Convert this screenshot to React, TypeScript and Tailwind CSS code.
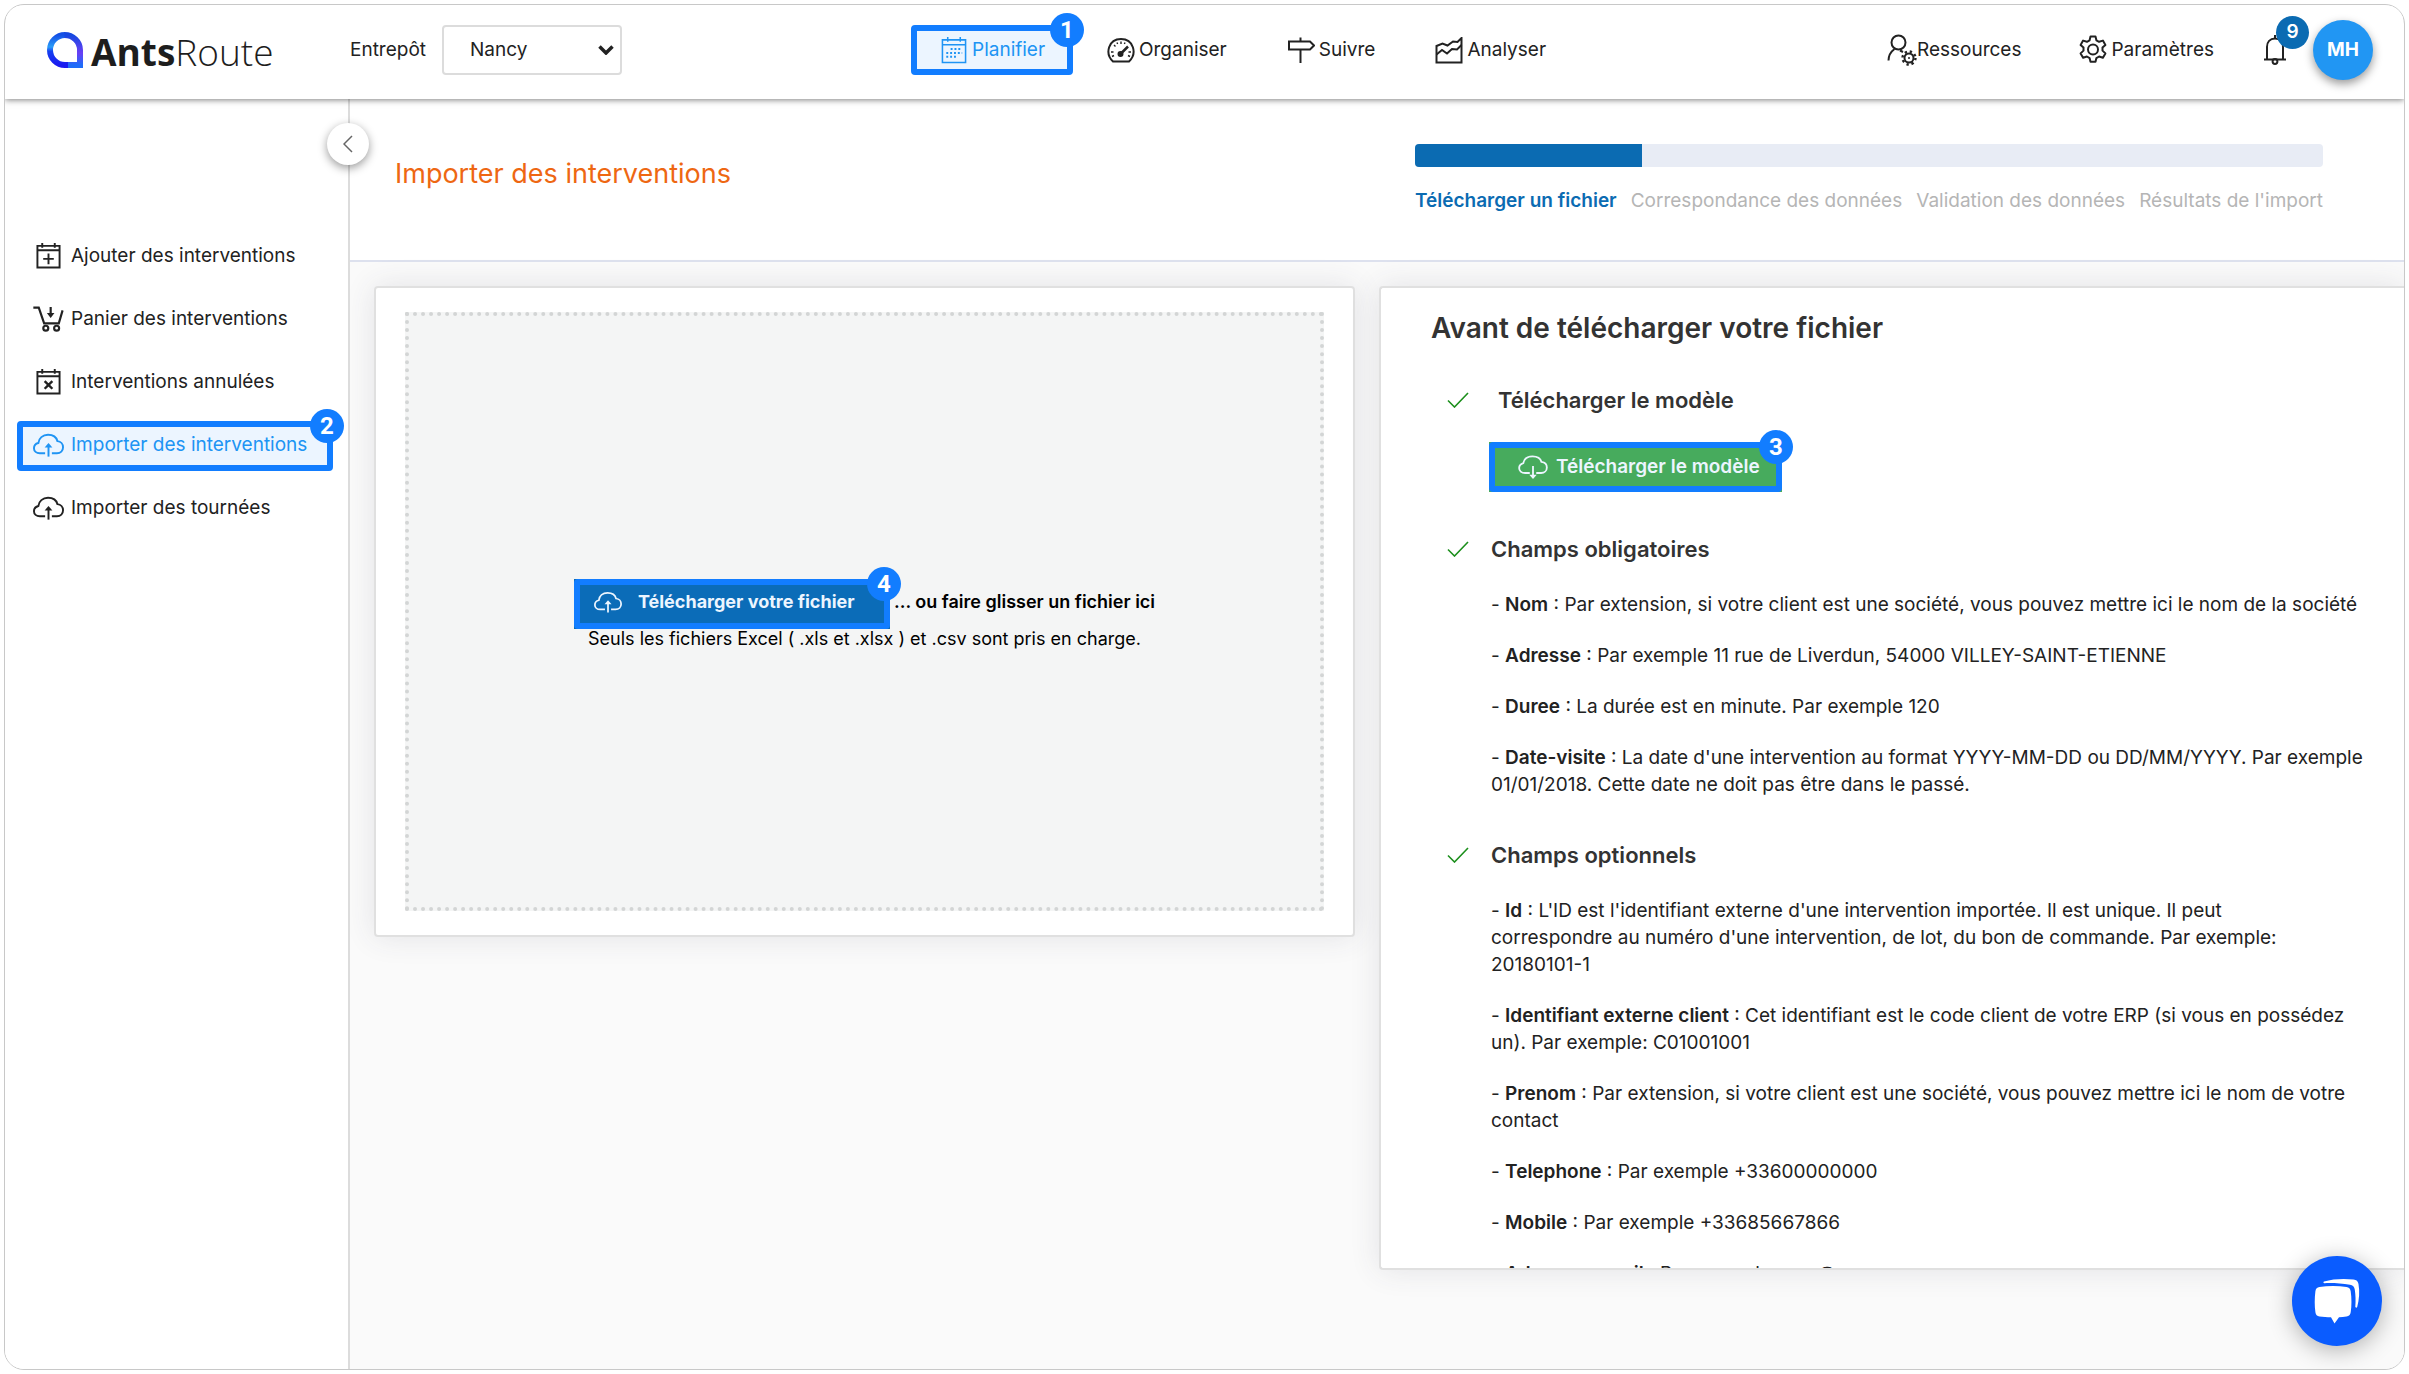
import React, { useState } from 'react';

type Glyph = React.FC<{ className?: string }>;

interface MarkerProps {
  step: number;
}

const Marker: React.FC<MarkerProps> = ({ step }) => (
  <span className="absolute inset-0 rounded-sm border-6 border-[#127dff] bg-[#127dff]/8 pointer-events-none">
    <span className="absolute -top-[18px] -right-[17px] flex h-[34px] w-[34px] items-center justify-center rounded-full bg-[#127dff] font-['Roboto',sans-serif] text-2xl font-bold text-white">
      {step}
    </span>
  </span>
);

const strokeProps = { fill: 'none', stroke: 'currentColor', strokeWidth: 2 };

const CalendarIcon: Glyph = ({ className }) => (
  <svg viewBox="0 0 26 28" className={className} {...strokeProps} strokeWidth={1.6}>
    <path d="M1 3h24v23.500H1zM1 8h24M6.500 0v5M19.500 0v5" />
    <path d="M9.500 12.500h12M5 16.500h16.500M5 20.500h12" strokeWidth={2} strokeDasharray="2 2" />
  </svg>
);

const GaugeIcon: Glyph = ({ className }) => (
  <svg viewBox="0 0 28 26" className={className} {...strokeProps}>
    <path d="M6 24C-2.500 16 1.500 1.500 14 1.500S30.500 16 22 24z" />
    <path d="M14 4v2.500M4 14.500h2.500M21.500 14.500H24M7 7.500l1.500 1.500M5 19l2-1M23 19l-2-1M10 5l.6 1.500M18 5l-.6 1.500" strokeWidth={1.400} />
    <path d="M13.500 16.500L21 9" strokeWidth={2.500} />
    <circle cx="13.500" cy="16.500" r="2" fill="currentColor" />
  </svg>
);

const SignIcon: Glyph = ({ className }) => (
  <svg viewBox="0 0 28 26" className={className} {...strokeProps}>
    <path d="M2 4h21l4 4-4 4H2zM13.500 0v4M13.500 12v13.500" />
  </svg>
);

const ChartIcon: Glyph = ({ className }) => (
  <svg viewBox="0 0 28 27" className={className} {...strokeProps}>
    <path d="M1.500 25.500V9l6-2.500 5 2L18 4.500l4.500.5 4-4v24.500z" />
    <path d="M1.500 17.500L7 13l5 3.500 5-4.500 5 .5 4.500-4.500" />
  </svg>
);

const UserGearIcon: Glyph = ({ className }) => (
  <svg viewBox="0 0 30 32" className={className} {...strokeProps}>
    <circle cx="11.500" cy="8.500" r="7" />
    <path d="M1.500 26.500c0-5 2-8.500 6-11.500M13 16.500l3 1.500" />
    <circle cx="22" cy="24" r="4.500" />
    <circle cx="22" cy="24" r="1" fill="currentColor" stroke="none" />
    <circle cx="22" cy="24" r="6.500" strokeWidth={2.400} strokeDasharray="2.300 2.800" />
  </svg>
);

const GearIcon: Glyph = ({ className }) => (
  <svg viewBox="0 0 28 30" className={className} {...strokeProps} strokeLinejoin="round">
    <path d="M11.500 1.500h5l.9 3.800 2.700 1.500 3.800-1.200 2.500 4.300-2.900 2.700v3l2.900 2.800-2.500 4.300-3.800-1.200-2.700 1.600-.9 3.700h-5l-.9-3.700-2.700-1.600-3.800 1.200-2.500-4.300 2.900-2.800v-3L1.600 9.900l2.500-4.300 3.800 1.200 2.700-1.500z" />
    <circle cx="14" cy="14.500" r="5" />
  </svg>
);

const BellIcon: Glyph = ({ className }) => (
  <svg viewBox="0 0 22 30" className={className} {...strokeProps}>
    <path d="M0 24.500h22M3 24.500V12c0-5 3-8.500 8-8.500s8 3.500 8 8.500v12.500M11 3.500V0" />
    <circle cx="11" cy="26.500" r="2.400" />
  </svg>
);

const AddCalendarIcon: Glyph = ({ className }) => (
  <svg viewBox="0 0 26 27" className={className} {...strokeProps}>
    <path d="M1.500 3h23v22.500h-23zM1.500 7.500h23M6.500 0v5M19.500 0v5M13 11v11M7.500 16.500h11" />
  </svg>
);

const CancelCalendarIcon: Glyph = ({ className }) => (
  <svg viewBox="0 0 26 27" className={className} {...strokeProps}>
    <path d="M1.500 3h23v22.500h-23zM1.500 7.500h23M6.500 0v5M19.500 0v5" />
    <path d="M9 12.500l8 8M17 12.500l-8 8" strokeWidth={2.500} />
  </svg>
);

const CartIcon: Glyph = ({ className }) => (
  <svg viewBox="0 0 28 24" className={className} {...strokeProps}>
    <path d="M0 1.500h5l5 14.500h13.500l3.500-12M16 1v8" />
    <path d="M12.500 6.500h7L16 11z" fill="currentColor" stroke="none" />
    <circle cx="11.500" cy="20.500" r="2.300" />
    <circle cx="21.500" cy="20.500" r="2.300" />
  </svg>
);

const CloudUpIcon: Glyph = ({ className }) => (
  <svg viewBox="0 0 32 24" className={className} {...strokeProps}>
    <path d="M12.500 20.500H7C3.500 20.500 1 18.300 1 15.300c0-2.800 1.800-4.600 4.500-5.300C6 5 10 1.500 15.500 1.500c5 0 8.700 2.500 9.700 6.500 3.500.3 5.800 3 5.800 6.300 0 3.600-2.600 6.200-6.300 6.200h-5.200" />
    <path d="M16 24V12" />
    <path d="M12 14.500l4-4.500 4 4.500z" fill="currentColor" stroke="none" />
  </svg>
);

const CloudDownIcon: Glyph = ({ className }) => (
  <svg viewBox="0 0 32 26" className={className} {...strokeProps}>
    <path d="M12.500 19.500H7.500C3.500 19.500 1 17 1 14c0-2.600 1.800-4.500 4.500-5.300C6.500 4 10.500 1.500 15.500 1.500s8.700 2.500 9.700 6C28.800 8 31 10.500 31 13.500c0 3.400-2.600 6-6.300 6h-5.200" />
    <path d="M16 12v11" />
    <path d="M12 21.500h8L16 26z" fill="currentColor" stroke="none" />
  </svg>
);

const CheckIcon: Glyph = ({ className }) => (
  <svg viewBox="0 0 22 16" className={className} fill="none" stroke="#1c8f1c" strokeWidth={1.600}>
    <path d="M1 8.500L7.500 15 21 1" />
  </svg>
);

const ChatIcon: Glyph = ({ className }) => (
  <svg viewBox="0 0 46 46" className={className} fill="#fff">
    <path d="M10 3.500C19 .7 31 .5 39.500 1.500c3 .4 4.500 1.700 5 4.500 1.300 7.500.8 15.500-1.300 23-.3 1-1.900.8-1.900-.2.500-6 .3-11.500-.5-17-.4-3-2-4.600-4.800-5C27.500 5.500 19 4.800 10.500 5.200c-1.200 0-1.500-1.300-.5-1.700z" />
    <path d="M5.500 9C14 7.500 24 7.500 32.500 9c2.500.4 3.800 1.700 4.200 4.200 1 7 1 14.500 0 21-.4 2.500-1.700 3.800-4.200 4.200-2.600.4-5 .7-7.500.9L20.500 45.500 17 39.300c-4-.2-8-.4-11.500-.9-2.500-.4-3.700-1.700-4.100-4.200-.9-6.500-.9-14 0-21C1.800 10.700 3 9.400 5.500 9z" />
  </svg>
);

const Logo = () => (
  <a href="#" className="flex items-center gap-2 text-[#1d1d1d]">
    <svg viewBox="0 0 36 36" className="h-9 w-9" fill="none" strokeWidth={6}>
      <defs>
        <linearGradient id="logoLeft" x1="0" y1="0" x2="0" y2="1">
          <stop offset="0" stopColor="#1450e6" />
          <stop offset=".4" stopColor="#2a9df8" />
          <stop offset=".55" stopColor="#1540f0" />
          <stop offset="1" stopColor="#1b1bf0" />
        </linearGradient>
        <linearGradient id="logoRight" x1="0" y1="0" x2="0" y2="1">
          <stop offset="0" stopColor="#1548e0" />
          <stop offset=".6" stopColor="#6a3ff5" />
          <stop offset="1" stopColor="#1f6cf8" />
        </linearGradient>
      </defs>
      <path d="M18 3a15 15 0 0 0 0 30h4" stroke="url(#logoLeft)" />
      <path d="M17.500 3C26 3 33 9.500 33 18v15H21" stroke="url(#logoRight)" />
    </svg>
    <span className="pt-1 font-['Open_Sans',sans-serif] text-[37px] leading-10">
      <b className="font-bold">Ants</b>
      <span className="font-light">Route</span>
    </span>
  </a>
);

const mainNav = [
  { label: 'Planifier', Icon: CalendarIcon, step: 1 },
  { label: 'Organiser', Icon: GaugeIcon },
  { label: 'Suivre', Icon: SignIcon },
  { label: 'Analyser', Icon: ChartIcon },
];

const sideNav = [
  { label: 'Ajouter des interventions', Icon: AddCalendarIcon },
  { label: 'Panier des interventions', Icon: CartIcon },
  { label: 'Interventions annulées', Icon: CancelCalendarIcon },
  { label: 'Importer des interventions', Icon: CloudUpIcon, step: 2 },
  { label: 'Importer des tournées', Icon: CloudUpIcon },
];

const importSteps = [
  'Télécharger un fichier',
  'Correspondance des données',
  'Validation des données',
  "Résultats de l'import",
];

const requiredFields = [
  { name: 'Nom', text: 'Par extension, si votre client est une société, vous pouvez mettre ici le nom de la société' },
  { name: 'Adresse', text: 'Par exemple 11 rue de Liverdun, 54000 VILLEY-SAINT-ETIENNE' },
  { name: 'Duree', text: 'La durée est en minute. Par exemple 120' },
  { name: 'Date-visite', text: "La date d'une intervention au format YYYY-MM-DD ou DD/MM/YYYY. Par exemple 01/01/2018. Cette date ne doit pas être dans le passé." },
];

const optionalFields = [
  { name: 'Id', text: "L'ID est l'identifiant externe d'une intervention importée. Il est unique. Il peut\ncorrespondre au numéro d'une intervention, de lot, du bon de commande. Par exemple: 20180101-1" },
  { name: 'Identifiant externe client', text: 'Cet identifiant est le code client de votre ERP (si vous en possédez un). Par exemple: C01001001' },
  { name: 'Prenom', text: 'Par extension, si votre client est une société, vous pouvez mettre ici le nom de votre contact' },
  { name: 'Telephone', text: 'Par exemple +33600000000' },
  { name: 'Mobile', text: 'Par exemple +33685667866' },
  { name: 'Adresse e-mail', text: 'Par exemple xxxx@xxx.com' },
];

interface FieldSectionProps {
  title: string;
  fields: { name: string; text: string }[];
}

const FieldSection: React.FC<FieldSectionProps> = ({ title, fields }) => (
  <section className="mt-[43px]">
    <div className="flex items-center gap-[22px]">
      <CheckIcon className="h-4 w-[22px]" />
      <h3 className="text-[22px] leading-7 font-semibold text-[#333]">{title}</h3>
    </div>
    <div className="mt-7 ml-11 flex flex-col gap-6">
      {fields.map(field => (
        <p key={field.name} className="text-[19px] leading-[27px] whitespace-pre-line">
          - <b className="font-semibold">{field.name}</b> : {field.text}
        </p>
      ))}
    </div>
  </section>
);

const Header = () => {
  const [warehouse, setWarehouse] = useState('Nancy');

  return (
    <header className="relative z-10 flex h-[94px] shrink-0 items-start bg-white pt-5 shadow-[0_1px_6px_rgba(0,0,0,0.5)]">
      <div className="flex h-[50px] w-[906px] shrink-0 items-center pl-[42px]">
        <div className="w-[303px]">
          <Logo />
        </div>
        <label htmlFor="warehouse" className="w-[92px] text-[19px]">Entrepôt</label>
        <div className="relative">
          <select
            id="warehouse"
            value={warehouse}
            onChange={(e) => setWarehouse(e.target.value)}
            className="h-[50px] w-[180px] appearance-none rounded-sm border-2 border-[#dcdcdc] bg-white pl-[26px] text-[19px]"
          >
            <option>Nancy</option>
          </select>
          <svg viewBox="0 0 16 10" className="pointer-events-none absolute top-5 right-2 h-[10px] w-4" fill="none" stroke="currentColor" strokeWidth={3.500}>
            <path d="M1.500 1.500L8 8l6.500-6.500" />
          </svg>
        </div>
      </div>
      <nav className="flex items-center text-[19px]">
        {mainNav.map(({ label, Icon, step }) => (
          <a
            key={label}
            href="#"
            className={step ? 'relative mr-[34px] flex h-[50px] w-[162px] items-center gap-1 pl-[29px] text-[#2196f3]' : 'mr-[60px] flex h-[50px] items-center gap-1'}
          >
            <Icon className="h-[27px] w-7" />
            {label}
            {step && <Marker step={step} />}
          </a>
        ))}
      </nav>
      <div className="ml-auto flex h-[50px] items-center pr-[31px] text-[19px]">
        <a href="#" className="mr-[58px] flex items-center">
          <UserGearIcon className="h-8 w-[30px]" />
          Ressources
        </a>
        <a href="#" className="mr-[50px] flex items-center gap-1">
          <GearIcon className="h-[30px] w-7" />
          Paramètres
        </a>
        <button type="button" aria-label="Notifications" className="relative mr-[27px]">
          <BellIcon className="h-[30px] w-[22px]" />
          <span className="absolute -top-[19px] -right-[23px] flex h-[33px] w-[33px] items-center justify-center rounded-full bg-[#0b6bb2] font-semibold text-white">9</span>
        </button>
        <button type="button" className="h-[60px] w-[60px] rounded-full bg-[#2196f3] text-[19px] font-bold text-white shadow-[0_4px_10px_rgba(0,0,0,0.4)]">
          MH
        </button>
      </div>
    </header>
  );
};

const Sidebar = () => (
  <aside className="relative w-[345px] shrink-0 border-r-2 border-[#dcdcdc] bg-white pt-[133px]">
    <button type="button" aria-label="Réduire le menu" className="absolute top-6 -right-[21px] z-10 flex h-[42px] w-[42px] items-center justify-center rounded-full bg-white shadow-[0_3px_10px_rgba(0,0,0,0.4)]">
      <svg viewBox="0 0 10 18" className="h-[18px] w-[10px]" fill="none" stroke="#666" strokeWidth={1.500}>
        <path d="M9 1L1 9l8 8" />
      </svg>
    </button>
    <nav className="flex flex-col gap-[13px] pl-3">
      {sideNav.map(({ label, Icon, step }) => (
        <a
          key={label}
          href="#"
          className={step ? 'relative flex h-[50px] w-[316px] items-center gap-[7px] pb-0.5 pl-4 text-[19px] text-[#2196f3]' : 'flex h-[50px] w-[316px] items-center gap-[7px] pb-0.5 pl-4 text-[19px]'}
        >
          <Icon className="h-[26px] w-[31px]" />
          {label}
          {step && <Marker step={step} />}
        </a>
      ))}
    </nav>
  </aside>
);

const UploadCard = () => (
  <section className="h-[651px] w-[981px] shrink-0 rounded-sm border-2 border-[#e0e0e0] bg-white px-[29px] py-6 shadow-[0_0_30px_rgba(60,60,80,0.12)]">
    <div className="flex h-full flex-col items-center justify-center border-4 border-dotted border-[#d3d5d5] bg-[#f4f5f5] pt-1 text-black">
      <div className="flex items-center gap-1">
        <button type="button" className="relative flex h-[50px] w-[316px] items-center gap-4 bg-[#0b6bb2] pb-1 pl-5 text-lg font-bold text-white">
          <CloudUpIcon className="h-[22px] w-7" />
          Télécharger votre fichier
          <Marker step={4} />
        </button>
        <b className="pb-1 text-lg font-semibold">... ou faire glisser un fichier ici</b>
      </div>
      <p className="text-lg leading-5">Seuls les fichiers Excel ( .xls et .xlsx ) et .csv sont pris en charge.</p>
    </div>
  </section>
);

const HelpCard = () => (
  <section className="h-[984px] min-w-0 flex-1 overflow-hidden rounded-l-sm border-2 border-r-0 border-[#e0e0e0] bg-white pt-[22px] pr-8 pl-[50px] text-[#222] shadow-[0_0_30px_rgba(60,60,80,0.12)]">
    <h2 className="text-[28px] leading-9 font-semibold text-[#333]">Avant de télécharger votre fichier</h2>
    <div className="pl-4">
      <div className="mt-10 flex items-center gap-[29px]">
        <CheckIcon className="h-4 w-[22px]" />
        <h3 className="text-[22px] leading-7 font-semibold text-[#333]">Télécharger le modèle</h3>
      </div>
      <button type="button" className="relative mt-7 ml-[42px] flex h-[50px] w-[293px] items-center gap-2 bg-[#4caf50] pl-[29px] text-[19px] font-semibold text-white">
        <CloudDownIcon className="h-6 w-[30px]" />
        Télécharger le modèle
        <Marker step={3} />
      </button>
      <FieldSection title="Champs obligatoires" fields={requiredFields} />
      <FieldSection title="Champs optionnels" fields={optionalFields} />
    </div>
  </section>
);

const App = () => (
  <div className="flex h-screen bg-white p-1 font-['Inter',sans-serif] text-[#222]">
    <div className="relative flex min-w-0 flex-1 flex-col overflow-hidden rounded-[20px] border border-[#c8c8c8]">
      <Header />
      <div className="flex min-h-0 flex-1">
        <Sidebar />
        <main className="flex min-w-0 flex-1 flex-col bg-[#fafafa]">
          <div className="flex h-[163px] shrink-0 items-start justify-between border-b-2 border-[#dde1ee] bg-white pr-[81px] pl-[45px]">
            <h1 className="mt-[57px] text-[27px] leading-9 text-[#ee6712]">Importer des interventions</h1>
            <div className="mt-[45px] w-[908px]">
              <div className="h-[23px] overflow-hidden rounded-sm bg-[#e8ecf5]">
                <div className="h-full w-1/4 bg-[#0b6bb2]" />
              </div>
              <ol className="mt-5 flex justify-between text-[19px] text-[#b5b5b5]">
                {importSteps.map((label, i) => (
                  <li key={label} className={i === 0 ? 'font-semibold text-[#0b6bb2]' : ''}>{label}</li>
                ))}
              </ol>
            </div>
          </div>
          <div className="flex min-h-0 flex-1 items-start gap-6 pt-6 pl-6">
            <UploadCard />
            <HelpCard />
          </div>
        </main>
      </div>
      <button type="button" aria-label="Ouvrir le chat" className="absolute right-[22px] bottom-[23px] flex h-[90px] w-[90px] items-center justify-center rounded-full bg-[#0a5cff] shadow-[0_4px_24px_rgba(0,0,0,0.3)]">
        <ChatIcon className="h-[46px] w-[46px]" />
      </button>
    </div>
  </div>
);

export default App;
